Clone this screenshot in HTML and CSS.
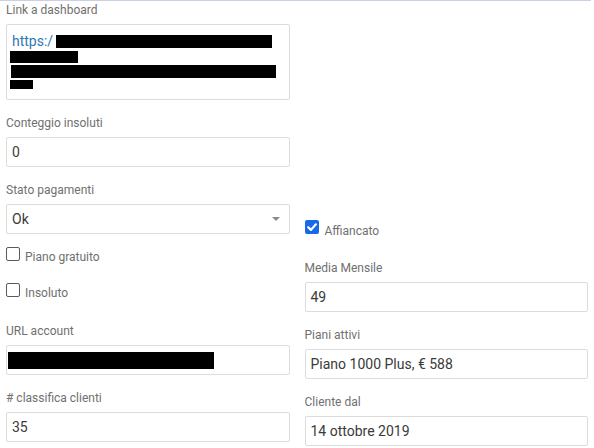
FILE: index.html
```html
<!DOCTYPE html>
<html lang="it">
<head>
<meta charset="utf-8">
<title>Cliente</title>
<link rel="stylesheet" href="styles.css">
</head>
<body>
<div class="panel">
  <div class="grid">
    <div class="col">
      <div class="field">
        <label class="lbl">Link a dashboard</label>
        <div class="textarea">
          <div class="tline"><span class="link">https:/</span><span class="redact r1"></span></div>
          <div class="tline"><span class="redact r2"></span></div>
          <div class="tline"><span class="redact r3"></span></div>
          <div class="tline top"><span class="redact r4"></span></div>
        </div>
      </div>
      <div class="field">
        <label class="lbl">Conteggio insoluti</label>
        <div class="input">0</div>
      </div>
      <div class="field field-select">
        <label class="lbl">Stato pagamenti</label>
        <div class="input select">Ok<span class="caret"></span></div>
      </div>
      <div class="checks">
        <div class="check"><span class="box"></span><span class="ctext">Piano gratuito</span></div>
        <div class="check"><span class="box"></span><span class="ctext">Insoluto</span></div>
      </div>
      <div class="field">
        <label class="lbl">URL account</label>
        <div class="input"><span class="redact r5"></span></div>
      </div>
      <div class="field">
        <label class="lbl"># classifica clienti</label>
        <div class="input">35</div>
      </div>
    </div>
    <div class="col col-right">
      <div class="checks">
        <div class="check"><span class="box checked"><svg viewBox="0 0 14 14" width="14" height="14"><path d="M3.2 7.2 L6 9.9 L10.9 4.3" fill="none" stroke="#fff" stroke-width="2.2" stroke-linecap="round" stroke-linejoin="round"/></svg></span><span class="ctext wide">Affiancato</span></div>
      </div>
      <div class="field">
        <label class="lbl">Media Mensile</label>
        <div class="input">49</div>
      </div>
      <div class="field">
        <label class="lbl">Piani attivi</label>
        <div class="input">Piano 1000 Plus, € 588</div>
      </div>
      <div class="field">
        <label class="lbl">Cliente dal</label>
        <div class="input">14 ottobre 2019</div>
      </div>
    </div>
  </div>
</div>
</body>
</html>
```

FILE: styles.css
```css
* { box-sizing: border-box; }
html, body { margin: 0; padding: 0; background: #fff; }
body {
  font-family: Roboto, "Liberation Sans", sans-serif;
  color: #3a3a3a;
  width: 594px;
  height: 448px;
  overflow: hidden;
}
.panel {
  border-top: 1px solid #c9d2e2;
  margin-right: 3px;
  padding-top: 1px;
}
.grid {
  display: grid;
  grid-template-columns: 1fr 1fr;
  column-gap: 15px;
  padding: 0 6px 0 6px;
  margin-right: -3px;
}
.col-right { padding-top: 218px; }
.field { margin-bottom: 15px; }
.field-select { margin-bottom: 13px; }
.lbl {
  display: block;
  font-size: 12px;
  line-height: 17px;
  color: #707070;
  margin-bottom: 5px;
}
.input {
  height: 30px;
  border: 1px solid #dcdcdc;
  border-radius: 2px;
  padding: 0 5px;
  font-size: 14px;
  line-height: 28px;
  color: #3a3a3a;
  display: flex;
  align-items: center;
}
.select { position: relative; }
.caret {
  position: absolute;
  right: 9px;
  top: 12px;
  width: 0;
  height: 0;
  border-left: 4px solid transparent;
  border-right: 4px solid transparent;
  border-top: 4px solid #8a8a8a;
}
.textarea {
  height: 76px;
  border: 1px solid #dcdcdc;
  border-radius: 2px;
  padding: 9px 5px 0 5px;
}
.tline {
  height: 15px;
  display: flex;
  align-items: center;
  font-size: 14px;
  line-height: 15px;
}
.tline.top { align-items: flex-start; }
.link { color: #2f77b5; }
.redact { display: inline-block; background: #000; }
.r1 { width: 216px; height: 13px; margin-left: 3px; }
.r2 { width: 68px; height: 12px; margin-left: -2px; }
.r3 { width: 265px; height: 13px; margin-left: -1px; }
.r4 { width: 23px; height: 9px; margin-left: -2px; margin-top: 1px; }
.r5 { width: 206px; height: 17px; margin-left: -4px; }
.checks {
  display: flex;
  flex-direction: column;
  gap: 17px;
  margin-bottom: 21px;
}
.check {
  display: flex;
  align-items: flex-start;
  gap: 5px;
  height: 19px;
}
.box {
  width: 14px;
  height: 14px;
  border: 1.6px solid #5a5a5a;
  border-radius: 2px;
  flex: none;
  display: flex;
  align-items: center;
  justify-content: center;
}
.box.checked {
  background: #1769e6;
  border: none;
}
.box svg { display: block; }
.ctext {
  font-size: 12px;
  line-height: 17px;
  padding-top: 2px;
  color: #707070;
}
.ctext.wide { padding-left: 1px; padding-top: 3px; }
```
